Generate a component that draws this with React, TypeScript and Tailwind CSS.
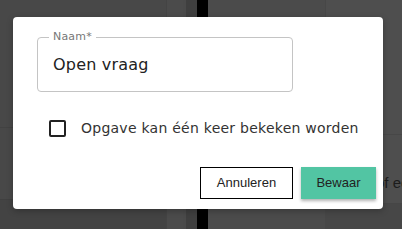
import { useState } from 'react';

/* Dimmed page behind the modal */
const Backdrop = () => (
  <div className="flex h-[229px] w-[402px]">
    <div className="flex w-[166px] shrink-0 flex-col bg-[#484848]">
      <div className="h-[128px] border-b border-[#424242]" />
      <div className="h-[72px] border-b border-[#404040]" />
      <div className="flex-1 bg-[#434343]" />
    </div>
    <div className="w-[17px] shrink-0 border-l border-[#444] bg-[#4b4b4b]" />
    <div className="w-[3px] shrink-0 bg-[#4a4a4a]" />
    <div className="w-[11px] shrink-0 bg-[#3f3f3f]" />
    <div className="w-[11px] shrink-0 bg-black" />
    <div className="flex w-[117px] shrink-0 flex-col bg-[#4b4b4b]">
      <div className="h-[135px] border-b border-[#454545]" />
      <div className="flex-1" />
    </div>
    <div className="flex min-w-0 flex-1 flex-col overflow-hidden border-l border-[#474747] bg-[#4e4e4e]">
      <div className="h-[135px] shrink-0 border-b border-[#474747]" />
      <div className="h-[69px] shrink-0 border-b border-[#464646] pl-[50px] pt-[40px] font-['Liberation_Sans',sans-serif] text-[15px] leading-none whitespace-nowrap text-[#1c1c1c]">
        of een
      </div>
      <div className="flex-1 bg-[#474747]" />
    </div>
  </div>
);

export default function App() {
  const [once, setOnce] = useState(false); // checkbox state

  return (
    <div className="relative h-[229px] w-[402px] overflow-hidden">
      <Backdrop />

      {/* Modal dialog */}
      <div className="absolute left-[13px] top-[17px] flex h-[192px] w-[370px] flex-col rounded-[4px] bg-white pl-[24px] pr-[7px] pt-[20px] shadow-[0_2px_6px_rgba(0,0,0,0.25)] font-['DejaVu_Sans',sans-serif]">
        {/* Outlined text field */}
        <div className="relative h-[55px] w-[256px] rounded-[4px] border border-[#c4c4c4] flex items-center pl-[15px] text-[16px] tracking-[0.2px] text-[#222]">
          <span className="absolute left-[11px] top-[-8px] bg-white px-[4px] text-[11px] leading-[14px] text-[#777]">
            Naam*
          </span>
          Open vraag
        </div>

        {/* Checkbox row */}
        <label className="mt-[28px] ml-[12px] flex h-[17px] items-center gap-[15px] cursor-pointer">
          <span
            onClick={() => setOnce(!once)}
            className="flex h-[17px] w-[17px] items-center justify-center rounded-[2px] border-2 border-[#222]"
          >
            {once && <span className="h-[9px] w-[9px] bg-[#222]" />}
          </span>
          <span className="text-[14px] tracking-[0.25px] text-[#333] whitespace-nowrap">Opgave kan één keer bekeken worden</span>
        </label>

        {/* Actions */}
        <div className="mt-[30px] flex justify-end gap-[8px] font-['Liberation_Sans',sans-serif] text-[13px] text-[#222]">
          <button className="h-[32px] w-[93px] border border-black bg-white">Annuleren</button>
          <button className="h-[32px] w-[75px] bg-[#52c5a3] shadow-[0_2px_3px_rgba(0,0,0,0.3)]">Bewaar</button>
        </div>
      </div>
    </div>
  );
}
